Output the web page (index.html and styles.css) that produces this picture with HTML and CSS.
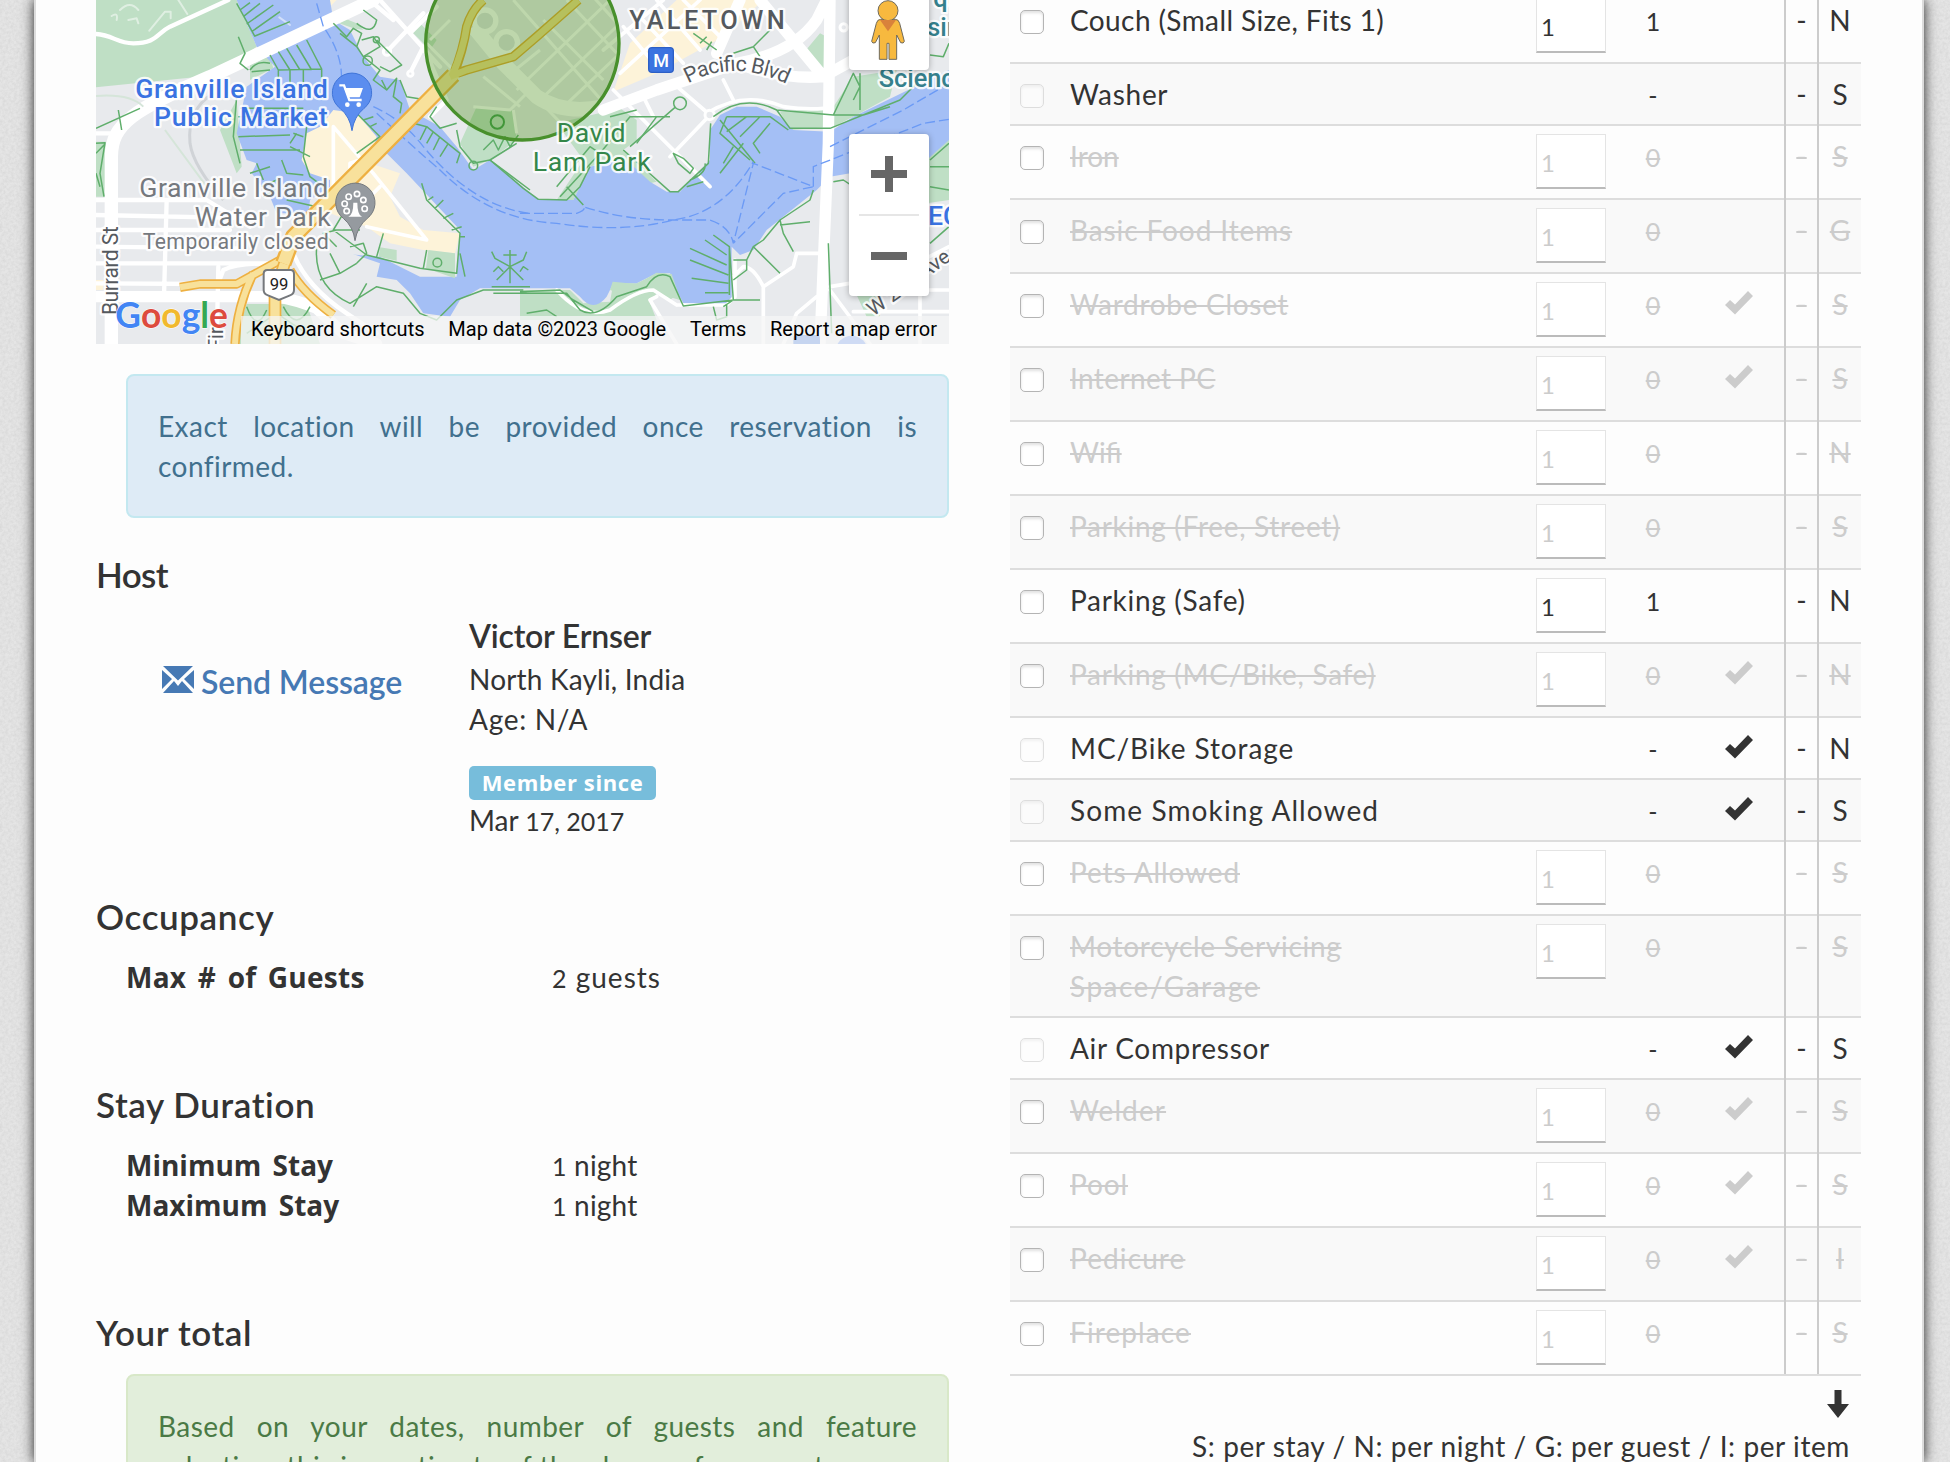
FILE: index.html
```html
<!DOCTYPE html>
<html lang="en">
<head>
<meta charset="utf-8">
<title>Listing</title>
<link rel="stylesheet" href="styles.css">
</head>
<body>
<svg class="defs" width="0" height="0">
  <symbol id="ok" viewBox="0 0 28 24"><path d="M0 14 L5 9 L10 13.5 L23 0 L28 5 L10 23.500 Z" fill="currentColor"/></symbol>
</svg>
<div class="page">
<div class="left">
  <div class="map">
    <svg class="map-art" viewBox="18 0 2559 1032" preserveAspectRatio="none">
      <clipPath id="disc"><circle cx="1297" cy="130" r="290"/></clipPath>
      <rect x="18" width="2559" height="1032" fill="#e8eaed"/>
      <path fill="#bfdfc5" d="M18 0H440L500 140L380 225L18 262ZM480 180L540 170L550 205L480 240ZM390 390L440 300L455 500L440 520ZM18 425H48L44 590H18ZM700 30L800 70L820 90L790 85L735 65ZM470 912H650L690 1032H430ZM960 90L990 70L1040 120L1020 150ZM1110 430L1160 320L1270 330L1280 420L1200 480L1150 500ZM1400 370L1590 325L1640 360L1640 420L1600 450L1700 545L1680 550L1560 480L1500 500L1450 600H1400L1480 480ZM870 740L920 750V780L870 770ZM1010 750L1100 790L1090 840L1005 800ZM2230 320L2290 230L2420 210L2400 290L2300 345L2230 380L2100 390L2070 335ZM2140 160L2190 100L2210 110V200L2190 210ZM1290 870H1440L1480 910L1560 905L1570 850L1640 850L1720 815L1760 850L1770 900L1700 880L1680 910L1700 960H1290ZM2510 430L2577 410V600L2510 610ZM2300 885H2370V950H2330Z"/>
      <path fill="#fdf3d9" d="M1620 130L1760 0H2020L1900 110L1700 220L1570 275ZM18 840H40V870H18ZM710 30L740 0H720Z"/>
      <path fill="#a4bff5" d="M440 0L500 140L555 200L470 260L440 400L470 480L500 490L485 520L540 590L560 640H700L700 700L740 745L870 790L860 830L920 840L960 880L1000 940L1080 950L1110 900L1170 865H1440L1470 890Q1510 940 1550 890L1570 850L1640 850L1700 820H1740L1760 870L1780 910L1900 915L1925 905V740L1950 765L1990 750L2030 690L2180 570L2220 530L2510 480L2577 420V210L2290 350L2220 395L2110 390L2070 350L2000 320H1940L1890 345L1860 390V480L1770 575H1730L1680 545L1620 490L1560 485L1500 500L1450 600H1350L1310 570L1200 480L1150 510L1100 440L1050 380L960 330L930 240L870 230L820 170L780 90L730 60L720 0Z"/>
      <path fill="#bfdfc5" d="M1560 870L1568 845L1640 852L1700 818L1745 822L1765 880L1740 900L1700 880L1640 900Z"/>
      <path fill="#e8eaed" d="M660 600L720 560L880 450L950 520L1110 690L1100 830L990 830L870 770L740 760L650 690Z"/>
      <path fill="#fdf3d9" d="M730 330L800 340L860 410L840 490L930 520L900 590L930 650L1000 690L1110 700L1095 760L1000 750L900 730L830 680L720 640V540L660 520L635 480L650 400L690 380Z"/>
      <path fill="#bfdfc5" d="M870 742L920 750V782L866 770ZM1015 750L1095 760V835L1008 805Z"/>
      <g fill="none" stroke="#fff" stroke-linecap="round" stroke-linejoin="round">
        <path stroke-width="13" d="M18 102C70 105 80 130 130 130C200 130 200 100 240 80L415 0M18 400H60"/>
        <path stroke-width="6" opacity=".5" d="M65 48Q85 35 80 60M90 30Q120 0 145 30M115 60L140 55L145 70M178 92L225 35H242V55M265 0L292 42M568 52L600 75"/>
        <path stroke-width="40" d="M850 0L360 230C130 330 65 370 64 470V1032"/>
        <path stroke-width="34" d="M18 890H560Q620 900 680 925L760 1000L860 1032"/>
        <path stroke-width="34" d="M1540 330L1700 270L1940 190Q2110 160 2180 60L2210 0M1940 190Q2080 240 2200 230L2290 180M1880 160L1950 0M2010 0L2200 230M2220 0L2215 430L2190 1032"/>
        <path stroke-width="13" d="M18 600H350L480 680M18 645L500 655M18 690H420M18 740L440 745M18 790H540M18 850L350 852M230 600L222 890M385 800L380 1032M540 790Q440 790 400 810L385 850M610 760Q650 860 770 940L860 1000M870 0L1050 200L1000 150M890 155L1000 40M960 100L1040 20M960 220L1000 140L1070 300L1020 350M850 10L910 60"/>
        <path stroke-width="11" d="M730 560V380L850 520L1010 720L830 680M780 540V490L810 480M870 560L830 600H790"/>
        <path stroke-width="11" d="M1570 270L1860 560M1750 250L1860 345L1740 470M1600 80L1700 200M1640 40L1780 190M1700 0L1830 150M1780 0L1890 110M1540 150L1720 0M1590 220L1830 0M1660 290L1690 350M1900 240L1930 300M1850 340Q1960 270 2080 320Q2150 330 2200 325M2220 860L2400 830L2577 740M2220 870L2340 1032M2290 870H2577M2290 935H2577M2490 850V1032M2180 890L2120 940L2080 1032M1760 915H1910L1935 890V780M1400 870Q1480 960 1560 930Q1640 870 1690 870L1760 915M2020 860Q1990 800 1960 800L1930 830M2020 860L2110 800L2120 760H2200M2020 860V1032M1700 890L1680 900L1760 1032"/>
      </g>
      <g fill="#e8eaed" stroke="#fff" stroke-width="9"><circle cx="891" cy="155" r="11"/><circle cx="961" cy="221" r="8"/><circle cx="1859" cy="345" r="14"/><circle cx="2261" cy="82" r="11"/></g>
      <path fill="none" stroke="#d0d3d7" stroke-width="9" d="M370 280Q290 330 300 430Q310 500 400 600"/>
      <path fill="none" stroke="#d5e5d9" stroke-width="6" d="M18 288Q120 280 160 320M225 390L350 560"/>
      <g fill="none" stroke="#5fae6b" stroke-width="4.500" stroke-linejoin="round">
        <path d="M440 10L495 110M450 30L480 8M460 50L510 10M470 72L550 15M485 95L570 35M495 108L600 65M540 165L565 210L695 207L650 120M565 155L600 210M590 145L630 210M620 135L665 210M565 210V250M600 210V250M640 210V250M695 207V250M445 110L465 160L450 190L475 210M480 210Q500 180 540 190M485 215L540 210"/>
        <path d="M440 290L430 410L450 490M450 325L640 325M445 350L600 350M445 410L600 405M450 450L630 450M500 490L520 540M515 560L560 540M520 590L555 570M480 520L540 500M575 480L590 520L640 525M600 440L660 470M610 400L640 410M600 430L620 400M650 380L640 470L660 530L700 560M590 600L680 620"/>
        <path d="M18 430L45 428L30 520L42 590M18 460L45 432M18 520L30 560M18 385L150 325M85 330L95 390"/>
        <path d="M730 70L770 110L790 85L815 100L800 140L750 100M800 140L820 170L870 210L850 240L890 270L920 235L910 290L935 310L930 340M890 270L875 240M930 240L950 290L1010 300M820 30L860 60Q850 110 800 70M815 120L850 110L870 140L820 170M860 120L935 195L900 215L870 200"/>
        <path d="M800 340L870 410L800 460M820 360L850 350M840 380L860 370M1040 320L1020 350L1050 385L1100 370M970 370L1010 380L990 420M1010 380L1110 460L1100 490M1030 395L1010 430M1050 410L1030 450M1075 430L1050 470M1100 390L1110 440L1150 490L1200 480L1320 570"/>
        <path d="M995 550L1010 600L1110 700L1100 820L990 805L830 765L730 690M1030 590L1015 600M1060 600L1035 625M1090 640L1060 655M1115 680L1085 690M1110 710L1125 710M1010 750L1000 805M1110 760L1125 830M880 700L860 770M680 740Q670 860 780 910L860 860L940 880L990 940L1040 960L1100 900L1180 870H1300M690 840L750 820L800 790M750 820L720 760M800 790L830 760L820 730L780 740M830 850L790 920M740 690L700 700L740 740M760 640L730 690L810 690"/>
        <circle cx="1042" cy="788" r="13"/><circle cx="1150" cy="497" r="13"/><circle cx="859" cy="119" r="9"/><circle cx="833" cy="182" r="14"/>
        <path d="M1260 750V850M1240 765H1280M1205 755L1215 775L1260 800L1300 780L1310 755M1210 815L1225 800L1240 815M1290 815L1300 800L1315 810M1220 840L1260 800L1300 840M1205 860H1320M1210 880H1310"/>
        <path d="M470 920Q500 1000 530 930M580 920Q620 1000 660 920M470 1000L560 940L650 1000"/>
        <path d="M1200 480L1280 430M1180 450L1210 420L1225 450L1245 410L1260 440L1285 405M1200 480L1300 565L1345 598L1430 600L1470 560L1500 500M1410 590L1530 460L1500 440L1400 560M1530 460L1620 350H1740M1430 560L1480 615M1600 450L1740 575H1765L1855 490L1862 370M1560 350L1640 330M1700 350L1640 430M1800 540Q1850 520 1845 490M1790 560L1840 545"/>
        <circle cx="1770" cy="310" r="19"/><path d="M1755 322L1620 440M1750 460L1765 490L1800 520L1810 505L1780 475Z"/>
        <path d="M1810 100L1880 150M1830 130L1850 110M1850 150L1865 125M1930 160L1990 140L2040 90M1990 140L2010 170M1890 360L1995 490M1910 350H2040L2095 390M1910 350L1890 400L1980 480M1970 350L1910 395M2010 350L1950 410M2040 370L1990 430L2010 460M1960 430L1890 520M1930 440L1900 490M1870 350Q1960 280 2060 330L2100 385L2220 385L2430 300L2490 240M2060 330L2230 345L2290 220L2310 260L2290 300M2230 345H2320L2400 320M2310 220V330M2577 130L2560 170L2520 165"/>
        <path d="M1800 745L1910 795M1800 780L1915 825M1805 835L1915 850M1845 878H1915M1845 720L1910 765M1870 705L1918 740V885M1918 740L1930 900L1900 920M1930 900L1780 918L1740 830Q1700 810 1670 860L1580 890Q1520 960 1470 930L1430 880H1290M1290 875L1410 870L1450 900L1510 935M1310 940L1370 930L1400 950M1870 920L1880 960L1910 950V915M1930 780L1970 780L1990 740L2020 720L2070 660L2160 600L2170 570M2070 660L2080 700L2110 755M1970 780V810L1930 840M1990 740L2040 790L2070 820M1930 900H2010M2070 675L2160 665M2215 730L2225 1000M2230 545L2260 540L2290 560M2520 480L2577 430M2520 500H2577M2520 560L2577 570M2520 730L2577 680"/>
      </g>
      <g fill="none" stroke="#6b9af5" stroke-width="4" stroke-dasharray="30 12">
        <path d="M680 10L700 80Q770 180 750 270M850 320Q940 360 1000 440Q1150 620 1320 640M860 340Q980 450 1050 510Q1200 660 1400 670Q1600 700 1750 660Q1900 640 1990 485M1290 640L1460 640Q1490 630 1480 620Q1600 660 1750 660H1860Q1920 680 1930 730L1990 490L2170 560L2080 580L1930 730M2170 560V500L2500 370L2577 358M2220 440L2440 330L2577 250"/>
      </g>
      <g clip-path="url(#disc)">
        <g fill="none" stroke="#fff" stroke-width="9"><path d="M1010 130L1100 220M1240 190L1480 440M1080 60L1020 120M1270 0L1560 330M1360 60L1540 240M1430 0L1590 170M1500 -20L1600 90M1280 270L1560 0M1250 230L1350 150M1340 310L1590 70M1400 340L1590 160M1180 230L1290 320M1150 320L1260 330L1320 270M1270 330L1280 400"/></g>
        <path fill="none" stroke="#fff" stroke-width="44" d="M1150 80L1240 190L1340 290Q1420 345 1540 320"/>
        <path fill="#dfe2e5" stroke="#fff" stroke-width="16" d="M1185 30A32 32 0 1 1 1185 95A32 32 0 1 1 1185 30ZM1250 95A32 32 0 1 1 1250 160A32 32 0 1 1 1250 95Z"/>
        <circle cx="1222" cy="366" r="20" fill="none" stroke="#3d9a4c" stroke-width="6"/>
      </g>
      <g fill="none" stroke-linejoin="round">
        <path stroke="#eeb041" stroke-width="28" d="M270 862L330 852H440L580 775M435 1032Q440 920 490 820M600 810Q640 880 730 945"/>
        <path stroke="#f8e19b" stroke-width="18" d="M270 862L330 852H440L580 775M435 1032Q440 920 490 820M600 810Q640 880 730 945"/>
        <path stroke="#eeb041" stroke-width="38" d="M555 1032V880L590 770"/>
        <path stroke="#f8e19b" stroke-width="28" d="M555 1032V880L590 770"/>
        <path stroke="#e3a62f" stroke-width="28" d="M1085 225L1130 210L1270 170L1340 110L1465 0M1090 225Q1120 150 1130 80Q1145 30 1180 0"/>
        <path stroke="#eeb041" stroke-width="50" d="M580 790L610 710L1090 225"/>
        <path stroke="#f8e19b" stroke-width="36" d="M580 790L610 710L1095 220"/>
        <path stroke="#f3dc84" stroke-width="20" d="M1080 230L1130 210L1270 170L1340 110L1465 0M1085 230Q1120 150 1130 80Q1145 30 1180 0"/>
      </g>
      <circle cx="1297" cy="130" r="290" fill="#4b9118" fill-opacity=".36" stroke="#48902c" stroke-width="10"/>
      <path fill="#5b8def" stroke="#3f74d8" stroke-width="3" d="M786 392Q780 350 750 325A59 59 0 1 1 822 325Q792 350 786 392Z"/>
      <path fill="none" stroke="#fff" stroke-width="7" d="M748 256H762L778 300H815"/><path fill="#fff" d="M762 264H819L809 292H774Z"/><circle cx="772" cy="314" r="7" fill="#fff"/><circle cx="806" cy="314" r="7" fill="#fff"/>
      <path fill="#959a9f" stroke="#74797e" stroke-width="3" d="M795 722Q790 680 760 655A59 59 0 1 1 832 655Q802 680 795 722Z"/>
      <g fill="none" stroke="#fff" stroke-width="5"><circle cx="770" cy="633" r="8"/><circle cx="764" cy="611" r="8"/><circle cx="776" cy="590" r="8"/><circle cx="801" cy="582" r="8"/><circle cx="820" cy="600" r="8"/><circle cx="824" cy="626" r="8"/></g>
      <path fill="#fff" d="M775 650H816Q802 645 802 608H790Q790 645 775 650Z"/>
      <path fill="#fff" stroke="#75787c" stroke-width="6" d="M532 810H602Q612 810 612 822V870Q612 882 600 886L567 900L534 886Q521 882 521 870V822Q521 810 532 810Z"/>
      <rect x="1676" y="143" width="74" height="74" rx="10" fill="#3b73e0" stroke="#2c5fc6" stroke-width="4"/>
      <rect x="2110" y="1005" width="80" height="40" rx="10" fill="#3b73e0"/><circle cx="2285" cy="1055" r="48" fill="#5b8def"/>
      <g class="labels">
        <text x="136" y="295" font-size="80" textLength="577" class="blue">Granville Island</text>
        <text x="192" y="379" font-size="80" textLength="521" class="blue">Public Market</text>
        <text x="148" y="592" font-size="80" textLength="567" class="grey">Granville Island</text>
        <text x="314" y="677" font-size="80" textLength="408" class="grey">Water Park</text>
        <text x="158" y="746" font-size="64" textLength="558" class="grey">Temporarily closed</text>
        <text x="1400" y="427" font-size="80" textLength="207" class="green">David</text>
        <text x="1328" y="512" font-size="80" textLength="354" class="green">Lam Park</text>
        <text x="1618" y="86" font-size="76" textLength="466" class="dark bold">YALETOWN</text>
        <text x="2366" y="260" font-size="76" class="teal">Science</text>
        <text x="2530" y="22" font-size="76" class="teal">qu</text>
        <text x="2512" y="108" font-size="76" class="teal">sina</text>
        <text x="2514" y="675" font-size="80" class="blue">EC</text>
        <text transform="translate(83 945) rotate(-90)" font-size="64" textLength="266" class="dark">Burrard St</text>
        <text transform="translate(398 1050) rotate(-90)" font-size="60" class="dark">Fir</text>
        <path id="pac" fill="none" d="M1794 250Q1930 175 2090 252"/>
        <text font-size="64" class="dark"><textPath href="#pac" textLength="308">Pacific Blvd</textPath></text>
        <text transform="translate(2350 950) rotate(-36)" font-size="62" class="dark">W 2nd Ave</text>
      </g>
      <text class="bold" x="1713" y="200" font-size="54" text-anchor="middle" fill="#fff">M</text>
      <text x="567" y="871" font-size="50" text-anchor="middle" fill="#222">99</text>
      <text class="logo" x="76" y="983" font-size="108" textLength="338" lengthAdjust="spacingAndGlyphs"><tspan fill="#4285f4">G</tspan><tspan fill="#dd4b3e">o</tspan><tspan fill="#f1b92e">o</tspan><tspan fill="#4285f4">g</tspan><tspan fill="#34a853">l</tspan><tspan fill="#dd4b3e">e</tspan></text>
    </svg>
    <div class="pegman"><svg viewBox="0 0 100 180"><g fill="#f7b93f" stroke="#6f6a5d" stroke-width="3"><path d="M28 58H72Q82 58 85 70L99 124Q97 132 88 128L76 105V178H53V130H47V178H24V105L12 128Q3 132 1 124L15 70Q18 58 28 58Z"/><circle cx="50" cy="32" r="30"/></g><path d="M26 60H74L50 94Z" fill="#d9823b"/></svg></div>
    <div class="zoom"><i class="plus"></i><hr><i class="minus"></i></div>
    <div class="credits"><span>Keyboard shortcuts</span><span>Map data ©2023 Google</span><span>Terms</span><span>Report a map error</span></div>
  </div>
  <p class="alert info"><span class="full">Exact location will be provided once reservation is</span><span>confirmed.</span></p>
  <h3 class="host-title">Host</h3>
  <div class="host">
    <a class="send"><svg viewBox="0 0 32 28"><path fill="currentColor" d="M1 0H31L16 14.500ZM0 4L10 13L0 23ZM32 4V23L22 13ZM1 27L12 15L16 20L20 15L31 27Z"/></svg><span>Send Message</span></a>
    <div class="who"><h4>Victor Ernser</h4><div class="place">North Kayli, India</div><div class="age">Age: N/A</div><span class="label">Member since</span><div>Mar <span class="digits">17, 2017</span></div></div>
  </div>
  <h3 class="wide">Occupancy</h3>
  <dl><dt class="guests">Max # of Guests</dt><dd class="guests"><span class="digits">2</span> guests</dd></dl>
  <h3 class="stay wide">Stay Duration</h3>
  <dl><dt>Minimum Stay</dt><dd><span class="digits">1</span> night</dd><dt>Maximum Stay</dt><dd><span class="digits">1</span> night</dd></dl>
  <h3 class="total wide">Your total</h3>
  <p class="alert success"><span class="full">Based on your dates, number of guests and feature</span><span>selection, this is a estimate of the charges for your stay:</span></p>
</div>
<div class="right">
  <div class="table">
  <div class="row"><input type="checkbox"><span class="t1">Couch (Small Size, Fits 1)</span><input class="n" value="1"><b>1</b><em></em><u>-</u><u>N</u></div>
  <div class="row"><input type="checkbox" disabled><span class="t2">Washer</span><i></i><b>-</b><em></em><u>-</u><u>S</u></div>
  <div class="row off"><input type="checkbox"><span>Iron</span><input class="n" value="1"><b>0</b><em></em><u>-</u><u>S</u></div>
  <div class="row off"><input type="checkbox"><span class="t3">Basic Food Items</span><input class="n" value="1"><b>0</b><em></em><u>-</u><u>G</u></div>
  <div class="row off"><input type="checkbox"><span class="t2">Wardrobe Closet</span><input class="n" value="1"><b>0</b><em><svg><use href="#ok"/></svg></em><u>-</u><u>S</u></div>
  <div class="row off"><input type="checkbox"><span class="t1">Internet PC</span><input class="n" value="1"><b>0</b><em><svg><use href="#ok"/></svg></em><u>-</u><u>S</u></div>
  <div class="row off"><input type="checkbox"><span>Wifi</span><input class="n" value="1"><b>0</b><em></em><u>-</u><u>N</u></div>
  <div class="row off"><input type="checkbox"><span class="t2">Parking (Free, Street)</span><input class="n" value="1"><b>0</b><em></em><u>-</u><u>S</u></div>
  <div class="row"><input type="checkbox"><span class="t2">Parking (Safe)</span><input class="n" value="1"><b>1</b><em></em><u>-</u><u>N</u></div>
  <div class="row off"><input type="checkbox"><span class="t2">Parking (MC/Bike, Safe)</span><input class="n" value="1"><b>0</b><em><svg><use href="#ok"/></svg></em><u>-</u><u>N</u></div>
  <div class="row"><input type="checkbox" disabled><span class="t3">MC/Bike Storage</span><i></i><b>-</b><em><svg><use href="#ok"/></svg></em><u>-</u><u>N</u></div>
  <div class="row"><input type="checkbox" disabled><span class="t4">Some Smoking Allowed</span><i></i><b>-</b><em><svg><use href="#ok"/></svg></em><u>-</u><u>S</u></div>
  <div class="row off"><input type="checkbox"><span class="t3">Pets Allowed</span><input class="n" value="1"><b>0</b><em></em><u>-</u><u>S</u></div>
  <div class="row off"><input type="checkbox"><span class="t2">Motorcycle Servicing<br><span class="t5">Space/Garage</span></span><input class="n" value="1"><b>0</b><em></em><u>-</u><u>S</u></div>
  <div class="row"><input type="checkbox" disabled><span class="t2">Air Compressor</span><i></i><b>-</b><em><svg><use href="#ok"/></svg></em><u>-</u><u>S</u></div>
  <div class="row off"><input type="checkbox"><span class="t4">Welder</span><input class="n" value="1"><b>0</b><em><svg><use href="#ok"/></svg></em><u>-</u><u>S</u></div>
  <div class="row off"><input type="checkbox"><span class="t3">Pool</span><input class="n" value="1"><b>0</b><em><svg><use href="#ok"/></svg></em><u>-</u><u>S</u></div>
  <div class="row off"><input type="checkbox"><span class="t4">Pedicure</span><input class="n" value="1"><b>0</b><em><svg><use href="#ok"/></svg></em><u>-</u><u>I</u></div>
  <div class="row off"><input type="checkbox"><span class="t4">Fireplace</span><input class="n" value="1"><b>0</b><em></em><u>-</u><u>S</u></div>
  </div>
  <svg class="arrow" viewBox="0 0 22 28"><path fill="#333" d="M7.500 0H14.500V14H22L11 28L0 14H7.500Z"/></svg>
  <div class="legend">S: per stay / N: per night / G: per guest / I: per item</div>
</div>
</div>
</body>
</html>
```
FILE: styles.css
```css
* { box-sizing: border-box; }
html, body { margin: 0; height: 1462px; overflow: hidden; }
body {
  background: #e5e5e5 url("data:image/svg+xml,%3Csvg xmlns='http://www.w3.org/2000/svg' width='300' height='300'%3E%3Cfilter id='n'%3E%3CfeTurbulence type='fractalNoise' baseFrequency='.35' numOctaves='3' stitchTiles='stitch'/%3E%3CfeColorMatrix values='0 0 0 0 .5 0 0 0 0 .5 0 0 0 0 .5 .5 0 0 0 -.15'/%3E%3C/filter%3E%3Crect width='300' height='300' filter='url(%23n)'/%3E%3C/svg%3E");
  font: 28px/40px Lato, sans-serif;
  color: #333;
}
.defs { position: absolute; }
.page {
  width: 1890px; height: 1462px; margin: 0 0 0 34px; padding: 0 61px 0 60px;
  border: solid #dcdcdc; border-width: 0 2px;
  background: #fdfdfd; background-clip: padding-box;
  box-shadow: 0 0 12px rgba(0,0,0,.85);
  display: flex; justify-content: space-between; overflow: hidden;
}
.left { width: 853px; }
.right { width: 851px; margin-top: -12px; }
.map { position: relative; height: 344px; overflow: hidden; }
.map-art { display: block; width: 853px; height: 344px; font-family: Roboto, sans-serif; }
.labels text { paint-order: stroke; stroke: #fff; stroke-width: 14px; stroke-opacity: .85; stroke-linejoin: round; }
.blue { fill: #3a73e2; font-weight: 500; }
.grey { fill: #75797e; }
.green { fill: #34874a; }
.dark { fill: #55595e; }
.teal { fill: #35808c; font-weight: 500; }
.bold { font-weight: 500; }
.logo { font-family: Lato, sans-serif; font-weight: 700; stroke: #fff; stroke-width: 3px; paint-order: stroke; }
.pegman, .zoom { position: absolute; left: 753px; width: 80px; background: #fff; border-radius: 4px; box-shadow: 0 1px 6px rgba(0,0,0,.3); }
.pegman { top: -10px; height: 80px; }
.pegman svg { display: block; width: 34px; height: 60px; margin: 10px auto 0 22px; }
.zoom { top: 134px; height: 162px; display: flex; flex-direction: column; align-items: center; }
.plus { width: 36px; height: 36px; margin-top: 22px; background: linear-gradient(#666,#666) center/36px 8px no-repeat, linear-gradient(#666,#666) center/8px 36px no-repeat; }
.zoom hr { width: 60px; height: 2px; margin: 22px 0 0; border: 0; background: #e6e6e6; }
.minus { width: 36px; height: 8px; margin-top: 36px; background: #666; }
.credits { position: absolute; left: 145px; right: 0; bottom: 0; height: 28px; display: flex; justify-content: space-between; padding: 0 12px 0 10px; background: rgba(245,245,245,.75); font: 20px/26px Roboto, sans-serif; color: #000; white-space: nowrap; }
.alert { margin: 30px 0 0 30px; padding: 30px; border: 2px solid; border-radius: 8px; letter-spacing: .45px; }
.alert span { display: block; white-space: nowrap; }
.alert .full { white-space: normal; text-align: justify; text-align-last: justify; }
.info { background: #deebf6; border-color: #c3e8f0; color: #41708e; }
.success { background: #e2eedb; border-color: #d8e8c8; color: #4a7a45; margin-top: 22px; }
h3, h4 { margin: 0; font-weight: 600; line-height: 40px; }
h3 { font-size: 35px; }
.wide { letter-spacing: .6px; }
.host-title { margin-top: 36px; letter-spacing: -.6px; }
.host { display: flex; margin-top: 22px; height: 280px; }
.send { display: flex; width: 307px; padding-left: 66px; margin-right: 66px; margin-top: 46px; font-size: 32px; font-weight: 600; letter-spacing: -.1px; color: #4679b4; gap: 7px; white-space: nowrap; }
.send svg { width: 32px; height: 28px; margin-top: 4px; }
h4 { font-size: 32px; height: 43px; letter-spacing: -.2px; }
.place { letter-spacing: .2px; }
.age { letter-spacing: .7px; }
.digits { font-size: 25px; }
.label { display: block; width: 187px; height: 34px; margin-top: 27px; border-radius: 5px; background: #77bddb; color: #fff; font: 700 22px/32px "Open Sans", sans-serif; letter-spacing: .6px; text-align: center; }
dl { display: grid; grid-template-columns: 426px 1fr; grid-auto-rows: 40px; margin: 21px 0 0 30px; }
dt { font-family: "Open Sans", sans-serif; font-weight: 700; word-spacing: 4px; }
dt.guests { letter-spacing: .25px; }
dd { margin: 0; letter-spacing: .2px; }
dd.guests { letter-spacing: 1px; }
.stay { margin-top: 87px; }
.total { margin-top: 87px; }
.row { display: grid; grid-template-columns: 60px 466px 70px 94px 84px 33px 44px; border-top: 2px solid #ddd; min-height: 62px; }
.row:nth-child(even) { background: #f9f9f9; }
.table { border-bottom: 2px solid #ddd; }
.row > * { padding-top: 10px; padding-bottom: 10px; text-align: center; }
.row > span { text-align: left; }
.t1 { letter-spacing: .4px; }
.t2 { letter-spacing: .7px; }
.t3 { letter-spacing: .9px; }
.t4 { letter-spacing: 1.1px; }
.t5 { letter-spacing: 1.5px; }
.row b, .row u, .row em { font-weight: 400; text-decoration: none; font-style: normal; }
.row b { font-size: 25px; padding-top: 11px; padding-bottom: 9px; }
.row u { border-left: 2px solid #ccc; margin-top: -2px; padding-top: 12px; }
.off { color: #ccc; }
.row.off > span, .row.off b, .row.off u { text-decoration: line-through; text-decoration-thickness: 2px; }
input { appearance: none; margin: 0; font: inherit; color: inherit; }
input[type=checkbox] { width: 24px; height: 24px; margin: 20px 0 0 10px; padding: 0; border: 1px solid #b4b4b4; border-radius: 5px; background: #fff; box-shadow: inset 0 2px 3px rgba(0,0,0,.12); }
input[disabled] { opacity: .4; }
.row .n { width: 70px; height: 55px; margin: 8px 0 9px; padding: 2px 0 0 4px; font-size: 24px; text-align: left; background: #fff; border: 1px solid #e4e4e4; border-bottom: 2px solid #bbb; }
em svg { display: block; width: 28px; height: 24px; margin: 7px 0 0 25px; }
.arrow { display: block; width: 22px; height: 28px; margin: 14px 12px 0 auto; }
.legend { text-align: right; padding-right: 11px; margin-top: 8px; white-space: nowrap; letter-spacing: .6px; }
```
